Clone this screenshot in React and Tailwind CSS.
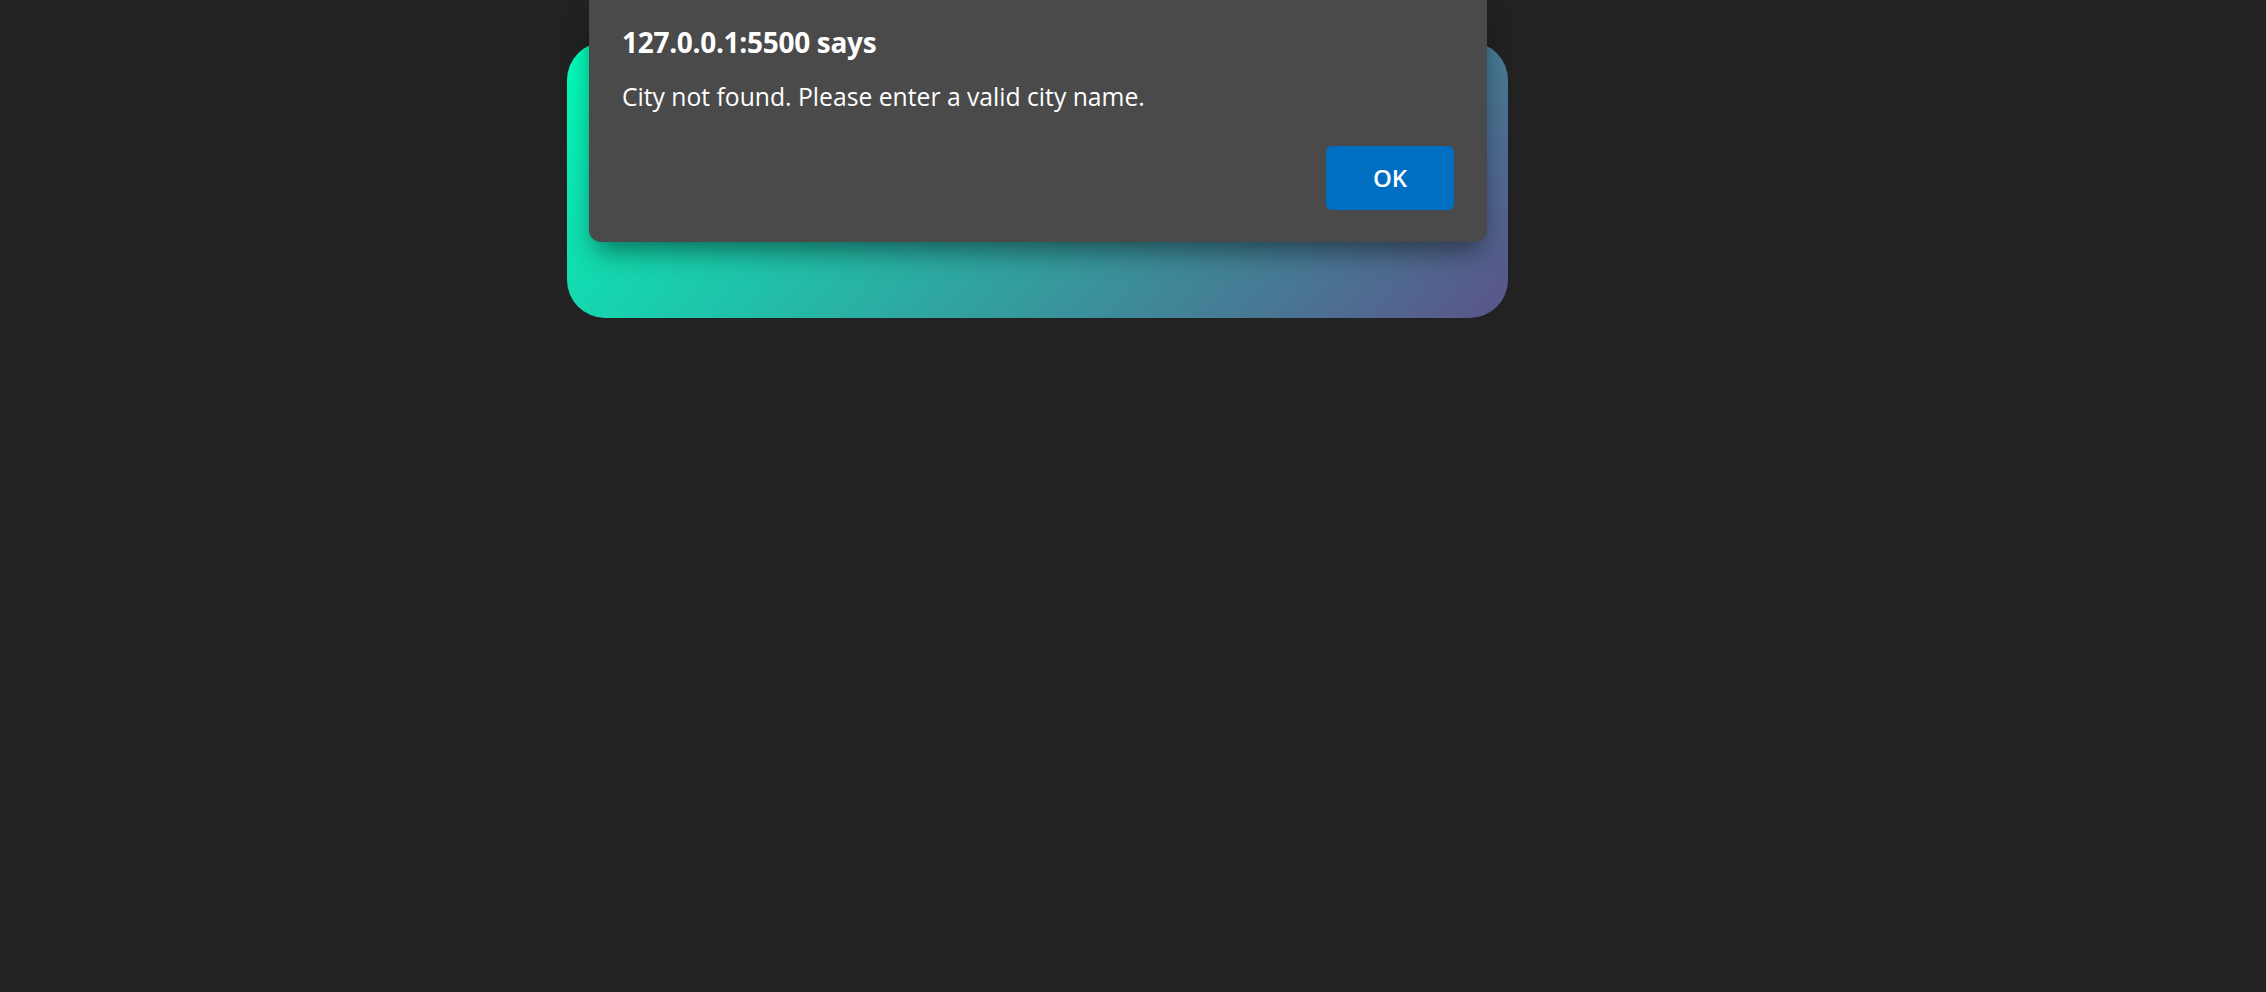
import React from 'react';

function AlertDialog() {
  return (
    <div className="absolute left-[589px] top-0 w-[898px] h-[242px] bg-[#4a4a4a] rounded-b-[12px] shadow-[0_14px_28px_-6px_rgba(0,0,0,0.5)] px-[33px] pt-[24px] pb-[32px] flex flex-col">
      <div className="text-[28px] font-bold text-white leading-[36px] tracking-[-0.3px]">127.0.0.1:5500 says</div>
      <div className="mt-[21px] text-[24.7px] text-white leading-[32px]">City not found. Please enter a valid city name.</div>
      <div className="mt-auto flex justify-end">
        <button className="w-[128px] h-[64px] rounded-[6px] bg-[#006fc2] text-white text-[24px] font-semibold">OK</button>
      </div>
    </div>
  );
}

export default function App() {
  return (
    <div className="relative min-h-screen w-full bg-[#222222] font-['Open_Sans','Noto_Sans',sans-serif]">
      <div className="pt-[42px] pl-[567px]">
        <div className="w-[941px] h-[276px] rounded-[38px] bg-[linear-gradient(135deg,#00feba,#5b548a)]" />
      </div>
      <AlertDialog />
    </div>
  );
}
